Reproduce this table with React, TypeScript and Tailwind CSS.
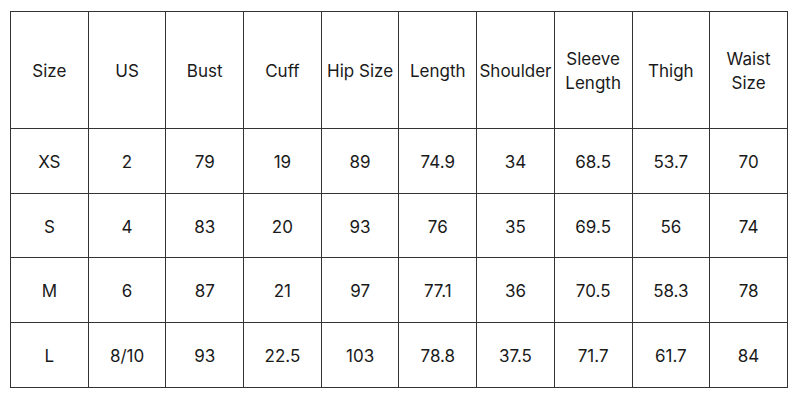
const headers = ['Size', 'US', 'Bust', 'Cuff', 'Hip Size', 'Length', 'Shoulder', 'Sleeve Length', 'Thigh', 'Waist Size']

const rows = [
  ['XS', '2', '79', '19', '89', '74.9', '34', '68.5', '53.7', '70'],
  ['S', '4', '83', '20', '93', '76', '35', '69.5', '56', '74'],
  ['M', '6', '87', '21', '97', '77.1', '36', '70.5', '58.3', '78'],
  ['L', '8/10', '93', '22.5', '103', '78.8', '37.5', '71.7', '61.7', '84'],
]

export default function App() {
  return (
    <div className="w-[800px] h-[400px] bg-white pl-[10px] pt-[11px] font-['Inter',sans-serif] text-[17px] text-[#1a1a1a]">
      <table className="table-fixed border-collapse w-[778px]">
        <thead>
          <tr className="h-[117px]">
            {headers.map((h) => (
              <th key={h} className="border border-[#333] font-normal leading-[24px] px-0 pt-[1px]">
                {h === 'Sleeve Length' || h === 'Waist Size' ? (
                  <>
                    {h.split(' ')[0]}
                    <br />
                    {h.split(' ')[1]}
                  </>
                ) : (
                  h
                )}
              </th>
            ))}
          </tr>
        </thead>
        <tbody>
          {rows.map((r, i) => (
            <tr key={i} className={i === 1 ? 'h-[64px]' : 'h-[65px]'}>
              {r.map((c, j) => (
                <td key={j} className="border border-[#333] text-center pt-1">
                  {c}
                </td>
              ))}
            </tr>
          ))}
        </tbody>
      </table>
    </div>
  )
}
